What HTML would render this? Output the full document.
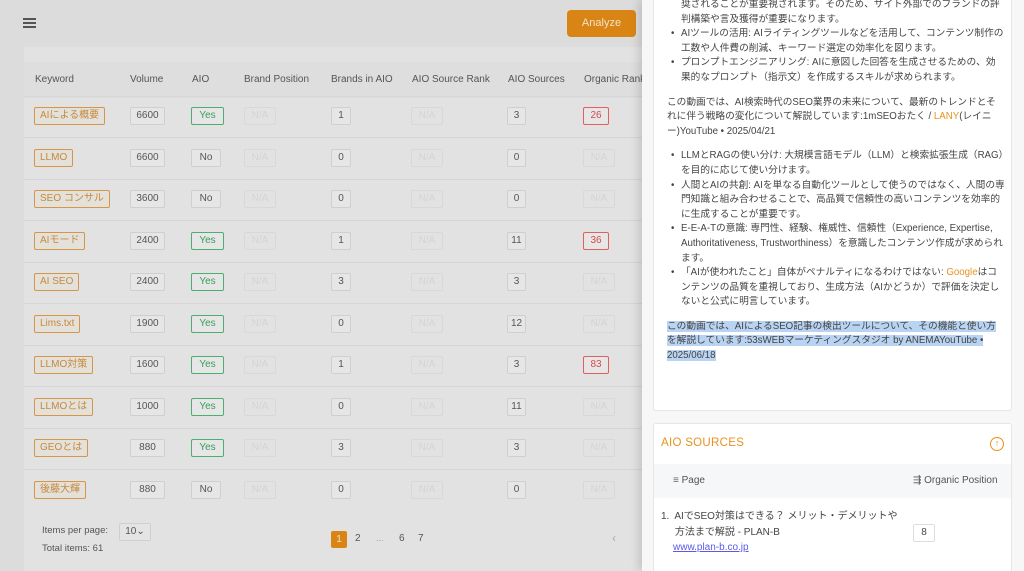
<!DOCTYPE html>
<html><head><meta charset="utf-8"><style>
*{box-sizing:border-box;margin:0;padding:0}
html,body{width:1024px;height:571px;overflow:hidden}
body{position:relative;background:#dcdcdc;font-family:"Liberation Sans","Noto Sans CJK JP",sans-serif;color:#444}
.a{position:absolute}
.card{left:24px;top:47px;width:620px;height:524px;background:#e2e2e2}
.hd{left:24px;top:62px;width:620px;height:36px;background:#dedede;font-size:10px;color:#555;white-space:nowrap;overflow:hidden}
.hd span{position:absolute;top:12px}
.row{left:24px;width:620px;height:41px;border-top:1px solid #d6d6d6}
.b{position:absolute;height:18px;line-height:16px;border:1px solid #cfcfcf;border-radius:2px;font-size:10px;padding:0 5px;background:#e6e6e6;color:#555;text-align:center;white-space:nowrap}
.k{border-color:#d4964a;color:#c48a3e;background:#e4e0da}
.y{border-color:#4caf70;color:#3a9c5c}
.na{color:#d4d4d4;border-color:#d8d8d8;background:#e2e2e2}
.r{border-color:#e06060;color:#d94848}
.drawer{left:642px;top:0;width:382px;height:571px;background:#f7f7f8;box-shadow:-4px 0 8px rgba(0,0,0,.12);overflow:hidden}
.dc{background:#fff;border:1px solid #e6e6e6;border-radius:3px}
.t{font-size:9.7px;line-height:14.6px;color:#444}
ul.t{list-style:none}
ul.t li{position:relative;padding-left:14px}
ul.t li:before{content:"•";position:absolute;left:4px;top:0}
.o{color:#e8911e}
</style></head><body>
<div class="a" style="left:23px;top:18px;width:13px;height:2px;background:#555;box-shadow:0 4px 0 #555,0 8px 0 #555"></div>
<div class="a" style="left:567px;top:10px;width:69px;height:27px;background:#d98515;border-radius:4px;color:#f4e3c8;font-size:11px;text-align:center;line-height:27px">Analyze</div>
<div class="a card"></div>
<div class="a hd"><span style="left:11px">Keyword</span><span style="left:106px">Volume</span><span style="left:168px">AIO</span><span style="left:220px">Brand Position</span><span style="left:307px">Brands in AIO</span><span style="left:388px">AIO Source Rank</span><span style="left:484px">AIO Sources</span><span style="left:560px">Organic Rank</span></div>

<div id="rows"></div>
<div class="a" style="left:42px;top:525px;font-size:9.5px;color:#555">Items per page:</div>
<div class="a b" style="left:119px;top:523px;width:32px;height:18px;background:#e4e4e4">10⌄</div>
<div class="a" style="left:42px;top:543px;font-size:9.5px;color:#555">Total items: 61</div>
<div class="a" style="left:331px;top:531px;width:16px;height:17px;background:#d98515;border-radius:2px;color:#f4e3c8;font-size:10px;text-align:center;line-height:17px">1</div>
<div class="a" style="left:355px;top:533px;font-size:10px;color:#555">2</div>
<div class="a" style="left:376px;top:533px;font-size:9px;color:#999">...</div>
<div class="a" style="left:399px;top:533px;font-size:10px;color:#555">6</div>
<div class="a" style="left:418px;top:533px;font-size:10px;color:#555">7</div>
<div class="a" style="left:612px;top:531px;font-size:12px;color:#aaa">‹</div>

<div class="a drawer">
 <div class="a dc" style="left:11px;top:-5px;width:359px;height:416px"></div>
 <div class="a t" style="left:25px;top:-2px;width:338px">
  <div style="padding-left:14px">奨されることが重要視されます。そのため、サイト外部でのブランドの評判構築や言及獲得が重要になります。</div>
  <ul class="t">
   <li>AIツールの活用: AIライティングツールなどを活用して、コンテンツ制作の工数や人件費の削減、キーワード選定の効率化を図ります。</li>
   <li>プロンプトエンジニアリング: AIに意図した回答を生成させるための、効果的なプロンプト（指示文）を作成するスキルが求められます。</li>
  </ul>
  <p style="margin-top:10px">この動画では、AI検索時代のSEO業界の未来について、最新のトレンドとそれに伴う戦略の変化について解説しています:1mSEOおたく / <span class="o">LANY</span>(レイニー)YouTube • 2025/04/21</p>
  <ul class="t" style="margin-top:10px">
   <li>LLMとRAGの使い分け: 大規模言語モデル（LLM）と検索拡張生成（RAG）を目的に応じて使い分けます。</li>
   <li>人間とAIの共創: AIを単なる自動化ツールとして使うのではなく、人間の専門知識と組み合わせることで、高品質で信頼性の高いコンテンツを効率的に生成することが重要です。</li>
   <li>E-E-A-Tの意識: 専門性、経験、権威性、信頼性（Experience, Expertise, Authoritativeness, Trustworthiness）を意識したコンテンツ作成が求められます。</li>
   <li>「AIが使われたこと」自体がペナルティになるわけではない: <span class="o">Google</span>はコンテンツの品質を重視しており、生成方法（AIかどうか）で評価を決定しないと公式に明言しています。</li>
  </ul>
  <p style="margin-top:10px"><span style="background:#b9d3f2">この動画では、AIによるSEO記事の検出ツールについて、その機能と使い方を解説しています:53sWEBマーケティングスタジオ by ANEMAYouTube • 2025/06/18</span></p>
 </div>
 <div class="a dc" style="left:11px;top:423px;width:359px;height:160px"></div>
 <div class="a" style="left:19px;top:437px;font-size:11.5px;color:#e8911e;letter-spacing:.3px">AIO SOURCES</div>
 <div class="a" style="left:348px;top:437px;width:14px;height:14px;border:1.3px solid #e8911e;border-radius:50%;color:#e8911e;font-size:9px;text-align:center;line-height:11px">↑</div>
 <div class="a" style="left:12px;top:464px;width:357px;height:34px;background:#f6f7f9"></div>
 <div class="a" style="left:31px;top:475px;font-size:10px;color:#666">≡ <span style="color:#555">Page</span></div>
 <div class="a" style="left:271px;top:475px;font-size:10px;color:#555">⇶ Organic Position</div>
 <div class="a t" style="left:19px;top:509px;font-size:10px;line-height:15.5px">1.&nbsp; AIでSEO対策はできる？ メリット・デメリットや<br>&nbsp;&nbsp;&nbsp;&nbsp;&nbsp;方法まで解説 - PLAN-B</div>
 <div class="a" style="left:31px;top:542px;font-size:10px;color:#5a5ae8;text-decoration:underline">www.plan-b.co.jp</div>
 <div class="a" style="left:271px;top:524px;width:22px;height:18px;border:1px solid #ddd;border-radius:2px;font-size:10px;text-align:center;line-height:16px;background:#fff">8</div>
</div>
<script>
var d=[["AIによる概要","6600","Yes","1","3","26"],["LLMO","6600","No","0","0",""],["SEO コンサル","3600","No","0","0",""],["AIモード","2400","Yes","1","11","36"],["AI SEO","2400","Yes","3","3",""],["Lims.txt","1900","Yes","0","12",""],["LLMO対策","1600","Yes","1","3","83"],["LLMOとは","1000","Yes","0","11",""],["GEOとは","880","Yes","3","3",""],["後藤大輝","880","No","0","0",""]];
var h="";
d.forEach(function(r,i){var c=116+i*41.5;var t=c-9;
h+='<div class="a row" style="top:'+(c-20.5)+'px"></div>';
h+='<div class="b k" style="left:34px;top:'+t+'px">'+r[0]+'</div>';
h+='<div class="b" style="left:130px;top:'+t+'px;width:35px">'+r[1]+'</div>';
h+='<div class="b'+(r[2]=="Yes"?" y":"")+'" style="left:191px;top:'+t+'px;width:'+(r[2]=="Yes"?33:30)+'px">'+r[2]+'</div>';
h+='<div class="b na" style="left:244px;top:'+t+'px;width:32px">N/A</div>';
h+='<div class="b" style="left:331px;top:'+t+'px;width:20px;padding:0">'+r[3]+'</div>';
h+='<div class="b na" style="left:411px;top:'+t+'px;width:32px">N/A</div>';
h+='<div class="b" style="left:507px;top:'+t+'px;width:19px;padding:0">'+r[4]+'</div>';
h+=r[5]?'<div class="b r" style="left:583px;top:'+t+'px;width:26px;padding:0">'+r[5]+'</div>':'<div class="b na" style="left:583px;top:'+t+'px;width:32px">N/A</div>';
});
document.getElementById("rows").innerHTML=h;
</script>
</body></html>
